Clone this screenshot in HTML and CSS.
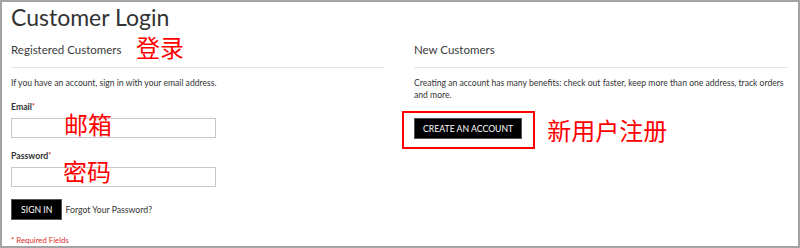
FILE: index.html
```html
<!DOCTYPE html>
<html lang="en">
<head>
<meta charset="utf-8">
<title>Customer Login</title>
<link rel="stylesheet" href="styles.css">
</head>
<body>
<div class="frame">
  <h1 class="page-title">Customer Login</h1>
  <div class="columns">
    <section class="block">
      <h2 class="block-title">Registered Customers</h2>
      <p class="note">If you have an account, sign in with your email address.</p>
      <div class="field">
        <label class="label">Email<span class="star">*</span></label>
        <input class="input" type="text">
      </div>
      <div class="field">
        <label class="label">Password<span class="star">*</span></label>
        <input class="input" type="password">
      </div>
      <div class="actions">
        <button class="btn btn-signin">SIGN IN</button>
        <a class="forgot">Forgot Your Password?</a>
      </div>
      <p class="required">* Required Fields</p>
    </section>
    <section class="block">
      <h2 class="block-title">New Customers</h2>
      <p class="note note-wide">Creating an account has many benefits: check out faster, keep more than one address, track orders and more.</p>
      <div class="create-row">
        <div class="highlight">
          <button class="btn btn-create">CREATE AN ACCOUNT</button>
        </div>
        <span class="cjk note-register">新用户注册</span>
      </div>
    </section>
  </div>
  <span class="cjk tag tag-login">登录</span>
  <span class="cjk tag tag-email">邮箱</span>
  <span class="cjk tag tag-password">密码</span>
</div>
</body>
</html>
```

FILE: styles.css
```css
* { box-sizing: border-box; }
html, body { margin: 0; padding: 0; background: #fff; }
body { font-family: Lato, "Open Sans", sans-serif; color: #333; }

.frame {
  position: relative;
  width: 800px;
  height: 248px;
  border: 2px solid #a3a3a3;
  overflow: hidden;
}

.page-title {
  margin: 0;
  padding: 1px 0 0 9px;
  font-size: 23px;
  line-height: 28px;
  font-weight: 400;
  color: #333;
}

.columns {
  display: grid;
  grid-template-columns: 373px 373px;
  column-gap: 30px;
  padding-left: 9px;
}

.block-title {
  margin: 11px 0 0;
  padding-bottom: 9px;
  border-bottom: 1px solid #e6e6e6;
  font-size: 11.5px;
  line-height: 16px;
  font-weight: 400;
  color: #3a3a3a;
}

.note {
  margin: 9px 0 0;
  font-size: 8.6px;
  line-height: 12px;
  color: #333;
}
.note-wide { margin-right: -10px; }

.field { margin-top: 12px; display: flex; flex-direction: column; align-items: flex-start; }
.field + .field { margin-top: 12px; }
.label {
  font-size: 8.7px;
  line-height: 12px;
  font-weight: 700;
  color: #333;
}
.star { color: #e02b27; font-size: 7px; vertical-align: top; line-height: 10px; }

.input {
  margin-top: 5px;
  width: 205px;
  height: 20px;
  border: 1px solid #c8c8c8;
  background: #fff;
  padding: 0 4px;
  font: inherit;
}

.actions {
  margin-top: 12px;
  display: flex;
  align-items: center;
  gap: 3px;
}

.btn {
  background: #000;
  color: #fff;
  border: 1px solid #555;
  font-family: Lato, sans-serif;
  font-size: 8.7px;
  line-height: 19px;
  height: 21px;
  padding: 0 9px;
  cursor: pointer;
}

.forgot { font-size: 8.7px; color: #333; }

.required {
  margin: 15px 0 0;
  font-size: 7.8px;
  line-height: 10px;
  color: #e02b27;
}

.create-row {
  margin-top: 10px;
  margin-left: -12px;
  display: flex;
  align-items: center;
  gap: 12px;
}
.highlight {
  border: 2px solid #ff0000;
  padding: 5px 11px 8px 10px;
  display: flex;
}
.btn-create { padding: 0 8px; }

.cjk {
  font-family: "Noto Sans CJK SC", sans-serif;
  color: #ff0000;
  font-size: 24px;
  line-height: 28px;
  font-weight: 400;
}

.tag { position: absolute; }
.tag-login { left: 134px; top: 31px; }
.tag-email { left: 62px; top: 108px; }
.tag-password { left: 61px; top: 155px; }
```
